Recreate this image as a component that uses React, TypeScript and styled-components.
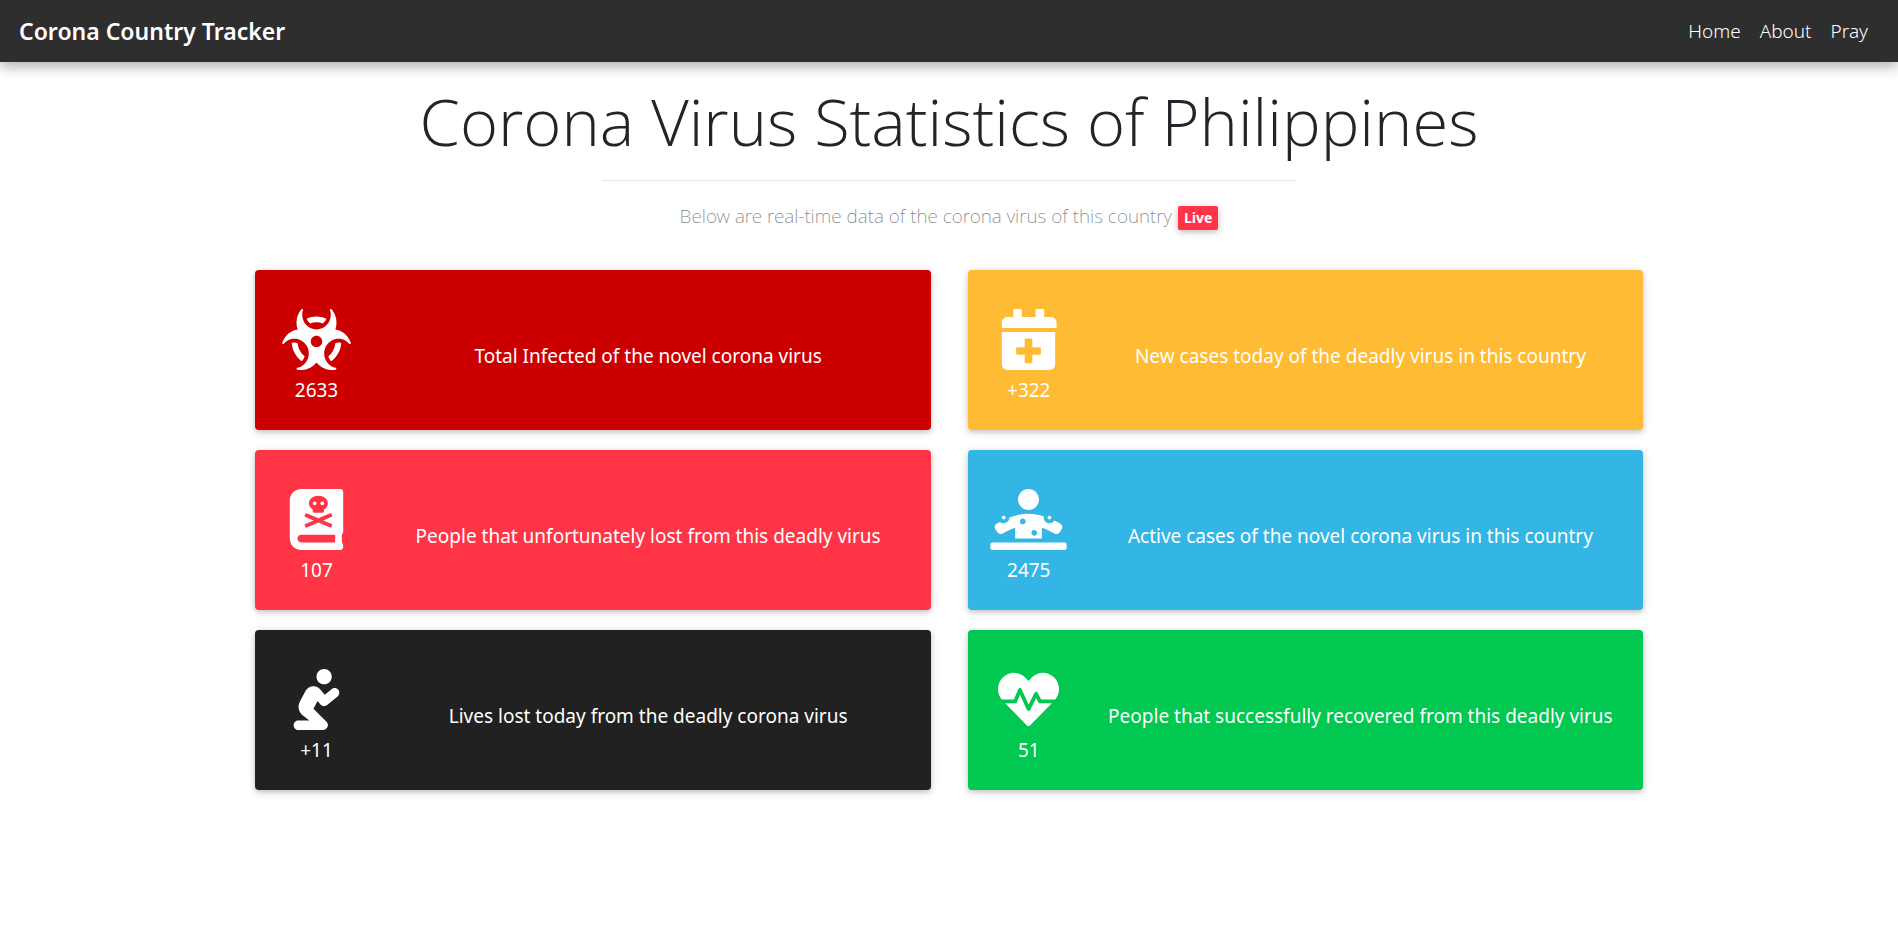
import React from 'react';
import styled, { createGlobalStyle } from 'styled-components';
import type { IconType } from 'react-icons';
import {
  FaBiohazard,
  FaBookDead,
  FaDiagnoses,
  FaHeartbeat,
  FaPray,
} from 'react-icons/fa';

const shadow = '0 2px 5px 0 rgba(0, 0, 0, 0.16), 0 2px 10px 0 rgba(0, 0, 0, 0.12)';
const deepShadow = '0 5px 11px 0 rgba(0, 0, 0, 0.18), 0 4px 15px 0 rgba(0, 0, 0, 0.15)';

const GlobalStyle = createGlobalStyle`
  *, *::before, *::after {
    box-sizing: border-box;
  }

  body {
    margin: 0;
    background: #fff;
    color: #212529;
    font-family: 'Segoe UI', 'Noto Sans', 'Open Sans', sans-serif;
    font-size: 19px;
    line-height: 24px;
  }
`;

const Navbar = styled.header`
  display: flex;
  align-items: center;
  justify-content: space-between;
  padding: 16px 30px 16px 19px;
  background: #2e2e2e;
  box-shadow: ${deepShadow};
`;

const Brand = styled.a`
  color: #fff;
  font-size: 23px;
  font-weight: 600;
  line-height: 30px;
  text-decoration: none;
`;

const NavLinks = styled.nav`
  display: flex;
  gap: 19px;
`;

const NavLink = styled.a`
  color: #fff;
  font-weight: 300;
  text-decoration: none;
`;

const Container = styled.main`
  width: 75%;
  margin: 0 auto;
  padding: 14px 18px 40px;
`;

const Title = styled.h1`
  margin: 0;
  font-family: 'Segoe UI', 'Open Sans', 'Noto Sans', sans-serif;
  font-size: 65px;
  font-weight: 300;
  line-height: 90px;
  text-align: center;
`;

const Divider = styled.hr`
  width: 50%;
  margin: 14px auto 21px;
  border: 0;
  border-top: 1px solid rgba(0, 0, 0, 0.1);
`;

const Lead = styled.p`
  display: flex;
  align-items: flex-end;
  justify-content: center;
  gap: 6px;
  margin: 0 0 40px;
  color: #868686;
  font-weight: 200;
  line-height: 28px;
`;

const Badge = styled.span`
  padding: 0 6px;
  border-radius: 2px;
  background: #ff3547;
  box-shadow: ${shadow};
  color: #fff;
  font-size: 14px;
  font-weight: 700;
  line-height: 24px;
`;

const Grid = styled.section`
  display: grid;
  grid-template-columns: repeat(2, minmax(0, 1fr));
  gap: 20px 37px;
`;

const Card = styled.article<{ $color: string }>`
  display: grid;
  grid-template-columns: minmax(0, 1fr) minmax(0, 5fr);
  align-items: center;
  padding: 39px 6px 28px;
  border-radius: 4px;
  background: ${({ $color }) => $color};
  box-shadow: ${shadow};
  color: #fff;
  text-align: center;
`;

const Figure = styled.div`
  display: flex;
  flex-direction: column;
  align-items: center;
  gap: 8px;

  svg {
    width: 77px;
    height: 61px;
  }
`;

const Count = styled.span`
  display: block;
`;

const Caption = styled.p`
  margin: 0;
`;

const CalendarPlus = () => (
  <svg viewBox="0 0 448 512" fill="currentColor" aria-hidden="true">
    <path d="M0 160v-44c0-26 22-48 48-48h48V12c0-7 5-12 12-12h48c7 0 12 5 12 12v56h116V12c0-7 5-12 12-12h48c7 0 12 5 12 12v56h56c26 0 48 22 48 48v44z" />
    <path
      fillRule="evenodd"
      d="M0 192h448v272c0 26-22 48-48 48H48c-26 0-48-22-48-48zm204 56c-7 0-12 5-12 12v60h-60c-7 0-12 5-12 12v40c0 7 5 12 12 12h60v60c0 7 5 12 12 12h40c7 0 12-5 12-12v-60h60c7 0 12-5 12-12v-40c0-7-5-12-12-12h-60v-60c0-7-5-12-12-12z"
    />
  </svg>
);

interface Stat {
  color: string;
  icon: IconType | React.FC;
  value: string;
  label: string;
}

const stats: Stat[] = [
  { color: '#cc0000', icon: FaBiohazard, value: '2633', label: 'Total Infected of the novel corona virus' },
  { color: '#ffbb33', icon: CalendarPlus, value: '+322', label: 'New cases today of the deadly virus in this country' },
  { color: '#ff3547', icon: FaBookDead, value: '107', label: 'People that unfortunately lost from this deadly virus' },
  { color: '#33b5e5', icon: FaDiagnoses, value: '2475', label: 'Active cases of the novel corona virus in this country' },
  { color: '#212121', icon: FaPray, value: '+11', label: 'Lives lost today from the deadly corona virus' },
  { color: '#00c851', icon: FaHeartbeat, value: '51', label: 'People that successfully recovered from this deadly virus' },
];

export default function App() {
  return (
    <>
      <GlobalStyle />
      <Navbar>
        <Brand href="#home">Corona Country Tracker</Brand>
        <NavLinks>
          <NavLink href="#home">Home</NavLink>
          <NavLink href="#about">About</NavLink>
          <NavLink href="#pray">Pray</NavLink>
        </NavLinks>
      </Navbar>
      <Container>
        <Title>Corona Virus Statistics of Philippines</Title>
        <Divider />
        <Lead>
          Below are real-time data of the corona virus of this country
          <Badge>Live</Badge>
        </Lead>
        <Grid>
          {stats.map(({ color, icon: Icon, value, label }) => (
            <Card key={label} $color={color}>
              <Figure>
                <Icon />
                <Count>{value}</Count>
              </Figure>
              <Caption>{label}</Caption>
            </Card>
          ))}
        </Grid>
      </Container>
    </>
  );
}
